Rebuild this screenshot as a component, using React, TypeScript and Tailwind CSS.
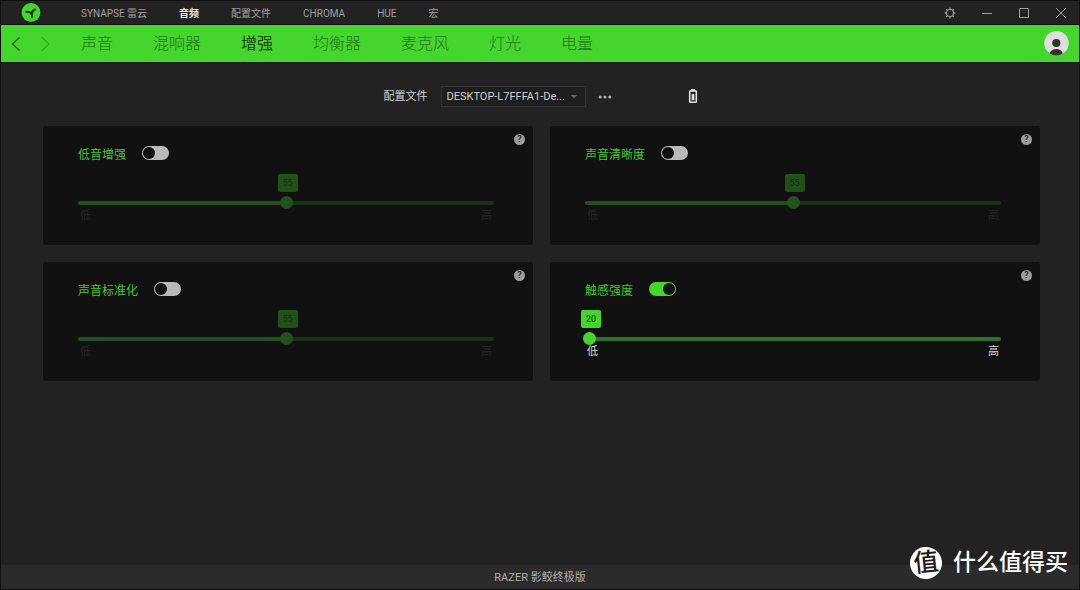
import { useState } from "react";

const TOP_LINKS = ["SYNAPSE 雷云", "音频", "配置文件", "CHROMA", "HUE", "宏"];
const TABS = ["声音", "混响器", "增强", "均衡器", "麦克风", "灯光", "电量"];

interface Setting {
  id: string;
  title: string;
  enabled: boolean;
  value: number;
  min: number;
}

const SETTINGS: Setting[] = [
  { id: "bass", title: "低音增强", enabled: false, value: 55, min: 10 },
  { id: "clarity", title: "声音清晰度", enabled: false, value: 55, min: 10 },
  { id: "normalize", title: "声音标准化", enabled: false, value: 55, min: 10 },
  { id: "haptic", title: "触感强度", enabled: true, value: 20, min: 20 },
];

function Logo() {
  return (
    <svg viewBox="0 0 20 20" className="size-5" aria-hidden="true">
      <circle cx="10" cy="9.5" r="9.4" fill="#44d62c" />
      <g stroke="#12300d" fill="none" strokeLinecap="round">
        <path d="M10.400 10C8.800 9.300 7.200 8.600 5.400 8.700" strokeWidth="1.900" />
        <path d="M10.400 10C11.400 8.400 12.300 7.200 14 6.500" strokeWidth="1.900" />
        <path d="M10.400 10C11 11.600 11.300 12.800 11 14.300" strokeWidth="1.900" />
      </g>
      <circle cx="10.600" cy="9.900" r="1.600" fill="#12300d" />
    </svg>
  );
}

function TitleBar() {
  return (
    <header className="flex h-6 items-center border-b border-[#101010] bg-[#222] pr-3 pl-5">
      <a href="#home" aria-label="Razer">
        <Logo />
      </a>
      <nav className="ml-10 flex flex-1 gap-8 pt-0.5 text-[10px] leading-4 whitespace-nowrap text-[#a0a0a0]">
        {TOP_LINKS.map((label) => (
          <a key={label} href="#top" className={label === "音频" ? "font-bold text-[#e8e8e8]" : ""}>
            {label}
          </a>
        ))}
      </nav>
      <div className="flex items-center gap-[25px] text-[#9c9c9c]">
        <button type="button" aria-label="设置">
          <svg viewBox="0 0 12 12" className="size-3" fill="none" stroke="currentColor">
            <circle cx="6" cy="6" r="3.5" strokeWidth="1.1" />
            <path
              d="M6 .6v1.9M6 9.5v1.9M.6 6h1.9M9.5 6h1.9M2.2 2.2l1.3 1.3M8.5 8.5l1.3 1.3M9.8 2.2 8.5 3.5M3.5 8.5 2.2 9.8"
              strokeWidth="1.3"
            />
          </svg>
        </button>
        <button type="button" aria-label="最小化">
          <svg viewBox="0 0 12 12" className="size-3" stroke="currentColor">
            <path d="M1 6.5h10" />
          </svg>
        </button>
        <button type="button" aria-label="最大化">
          <svg viewBox="0 0 12 12" className="size-3" fill="none" stroke="currentColor">
            <path d="M1.5 1.5h9v9h-9z" />
          </svg>
        </button>
        <button type="button" aria-label="关闭">
          <svg viewBox="0 0 12 12" className="size-3" stroke="currentColor">
            <path d="m1.2 1.2 9.6 9.6M10.8 1.2 1.2 10.8" />
          </svg>
        </button>
      </div>
    </header>
  );
}

function TabBar() {
  const [active, setActive] = useState("增强");
  return (
    <div className="flex h-[37px] items-center bg-[#44d62c] px-[10px]">
      <button type="button" aria-label="后退" className="text-[#1a5c10]">
        <svg viewBox="0 0 10 14" className="h-[14px] w-[10px]" fill="none" stroke="currentColor">
          <path d="M8.5 .5 1.500 7l7 6.500" strokeWidth="1.2" />
        </svg>
      </button>
      <button type="button" aria-label="前进" className="ml-5 text-[#36a824]">
        <svg viewBox="0 0 10 14" className="h-[14px] w-[10px]" fill="none" stroke="currentColor">
          <path d="m1 .5 7 6.500-7 6.500" strokeWidth="1.2" />
        </svg>
      </button>
      <nav className="ml-[30px] flex flex-1 gap-10 text-base leading-6 font-light whitespace-nowrap">
        {TABS.map((tab) => (
          <button
            key={tab}
            type="button"
            onClick={() => setActive(tab)}
            className={tab === active ? "font-normal text-[#14420c]" : "text-[#22751a]"}
          >
            {tab}
          </button>
        ))}
      </nav>
      <button type="button" aria-label="用户">
        <svg viewBox="0 0 25 25" className="size-[25px]">
          <circle cx="12.5" cy="12.2" r="12.2" fill="#dedede" />
          <circle cx="12.3" cy="12" r="4.1" fill="#333" />
          <path d="M5.800 22.500c.6-3 3.200-4.500 6.500-4.500s5.900 1.500 6.500 4.500c-3.800 2.600-9.200 2.600-13 0z" fill="#333" />
        </svg>
      </button>
    </div>
  );
}

function ProfileBar() {
  return (
    <div className="flex h-[21px] items-center justify-center text-[11px] text-[#d0d0d0]">
      <label htmlFor="profile" className="pt-0.5">
        配置文件
      </label>
      <div className="ml-[13px] grid items-center">
        <select
          id="profile"
          className="col-start-1 row-start-1 h-[21px] w-[145px] appearance-none border border-[#343434] bg-[#1e1e1e] pt-px pr-4 pl-[5px] text-[11px] outline-none"
        >
          <option>DESKTOP-L7FFFA1-De...</option>
        </select>
        <svg
          viewBox="0 0 8 4"
          className="pointer-events-none col-start-1 row-start-1 mr-2 h-1 w-2 justify-self-end"
          aria-hidden="true"
        >
          <path d="M.8 0h6.400L4 3.400z" fill="#666" />
        </svg>
      </div>
      <button type="button" aria-label="更多" className="ml-3">
        <svg viewBox="0 0 14 4" className="h-1 w-[14px]" fill="#b4b4b4">
          <circle cx="2.200" cy="2" r="1.500" />
          <circle cx="7" cy="2" r="1.500" />
          <circle cx="11.800" cy="2" r="1.500" />
        </svg>
      </button>
      <svg viewBox="0 0 10 15" className="mr-0.5 ml-[76px] h-[15px] w-[10px]" role="img" aria-label="电池">
        <path d="M3 0h4v2H3z" fill="#e0e0e0" />
        <rect x="1.700" y="1.900" width="6.600" height="11.300" rx=".8" fill="none" stroke="#e0e0e0" strokeWidth="1.600" />
        <path d="M3.700 5h2.600v6.300H3.700z" fill="#e0e0e0" />
      </svg>
    </div>
  );
}

function SettingCard({ setting }: { setting: Setting }) {
  const [on, setOn] = useState(setting.enabled);
  const [value, setValue] = useState(setting.value);
  const ratio = (value - setting.min) / (100 - setting.min);

  return (
    <section className="relative rounded-[3px] bg-[#111] pt-[18px] pr-[39px] pb-6 pl-[35px]">
      <button
        type="button"
        aria-label={`${setting.title}帮助`}
        className="absolute top-2 right-2 size-[11px] rounded-full bg-[#9c9c9c] text-center text-[9px] leading-[11px] font-medium text-[#222]"
      >
        ?
      </button>
      <div className="flex h-[18px] items-center gap-4">
        <label htmlFor={setting.id} className="pt-[3px] text-xs leading-[18px] text-[#44c832]">
          {setting.title}
        </label>
        <input
          id={setting.id}
          type="checkbox"
          role="switch"
          checked={on}
          onChange={(e) => setOn(e.target.checked)}
          className="flex h-[14px] w-[27px] appearance-none items-center rounded-full bg-[#b9b9b9] p-px before:size-3 before:rounded-full before:bg-[#111] checked:justify-end checked:bg-[#44d62c]"
        />
      </div>
      <div className="mt-3 flex">
        <output
          htmlFor={`${setting.id}-level`}
          style={{ marginLeft: `calc((100% - 9px) * ${ratio} - 4px)` }}
          className={
            "h-[18px] w-5 rounded-[2px] text-center text-[9px] leading-[18px] " +
            (on ? "bg-[#44d62c] text-[#123b0b]" : "bg-[#225019] text-[#122b0d]")
          }
        >
          {value}
        </output>
      </div>
      <div className="mt-1 grid h-[14px]">
        <div
          className={
            "col-start-1 row-start-1 h-1 self-center overflow-hidden rounded-full " +
            (on ? "bg-[#31702a]" : "bg-[#1b2f18]")
          }
        >
          <div
            className={"h-1 " + (on ? "bg-[#44d62c]" : "bg-[#274d1f]")}
            style={{ width: `${ratio * 100}%` }}
          />
        </div>
        <input
          id={`${setting.id}-level`}
          type="range"
          aria-label={setting.title}
          min={setting.min}
          max={100}
          value={value}
          disabled={!on}
          onChange={(e) => setValue(Number(e.target.value))}
          className="z-10 col-start-1 row-start-1 -mx-0.5 h-[13px] appearance-none bg-transparent [&::-webkit-slider-thumb]:size-[13px] [&::-webkit-slider-thumb]:appearance-none [&::-webkit-slider-thumb]:rounded-full [&::-webkit-slider-thumb]:bg-[#44d62c] disabled:[&::-webkit-slider-thumb]:bg-[#24521c]"
        />
      </div>
      <div
        className={
          "flex justify-between pt-px pr-0.5 pl-0.5 text-[11px] leading-[10px] " +
          (on ? "text-[#d8d8d8]" : "text-[#262626]")
        }
      >
        <span>低</span>
        <span>高</span>
      </div>
    </section>
  );
}

function Watermark() {
  return (
    <div className="pointer-events-none absolute right-[11px] bottom-[10px] flex items-center gap-[11px] text-white">
      <span className="size-8 -rotate-6 rounded-full bg-white text-center text-[25px] leading-[31px] font-medium text-[#1c1c1c]">
        值
      </span>
      <span className="pt-px text-[23px] leading-8 font-medium">什么值得买</span>
    </div>
  );
}

export default function App() {
  return (
    <div className="relative flex min-h-screen flex-col border border-[#101010] bg-[#222] font-[Roboto,'Noto_Sans_CJK_SC',sans-serif]">
      <TitleBar />
      <TabBar />
      <main className="flex-1 border-t border-[#101010] pt-[23px] pr-[39px] pb-10 pl-[42px]">
        <ProfileBar />
        <div className="mt-[19px] grid grid-cols-2 gap-[17px]">
          {SETTINGS.map((setting) => (
            <SettingCard key={setting.id} setting={setting} />
          ))}
        </div>
      </main>
      <footer className="bg-[#2b2b2b] pt-px text-center text-[11px] leading-[23px] text-[#b0b0b0]">
        RAZER 影鲛终极版
      </footer>
      <Watermark />
    </div>
  );
}
